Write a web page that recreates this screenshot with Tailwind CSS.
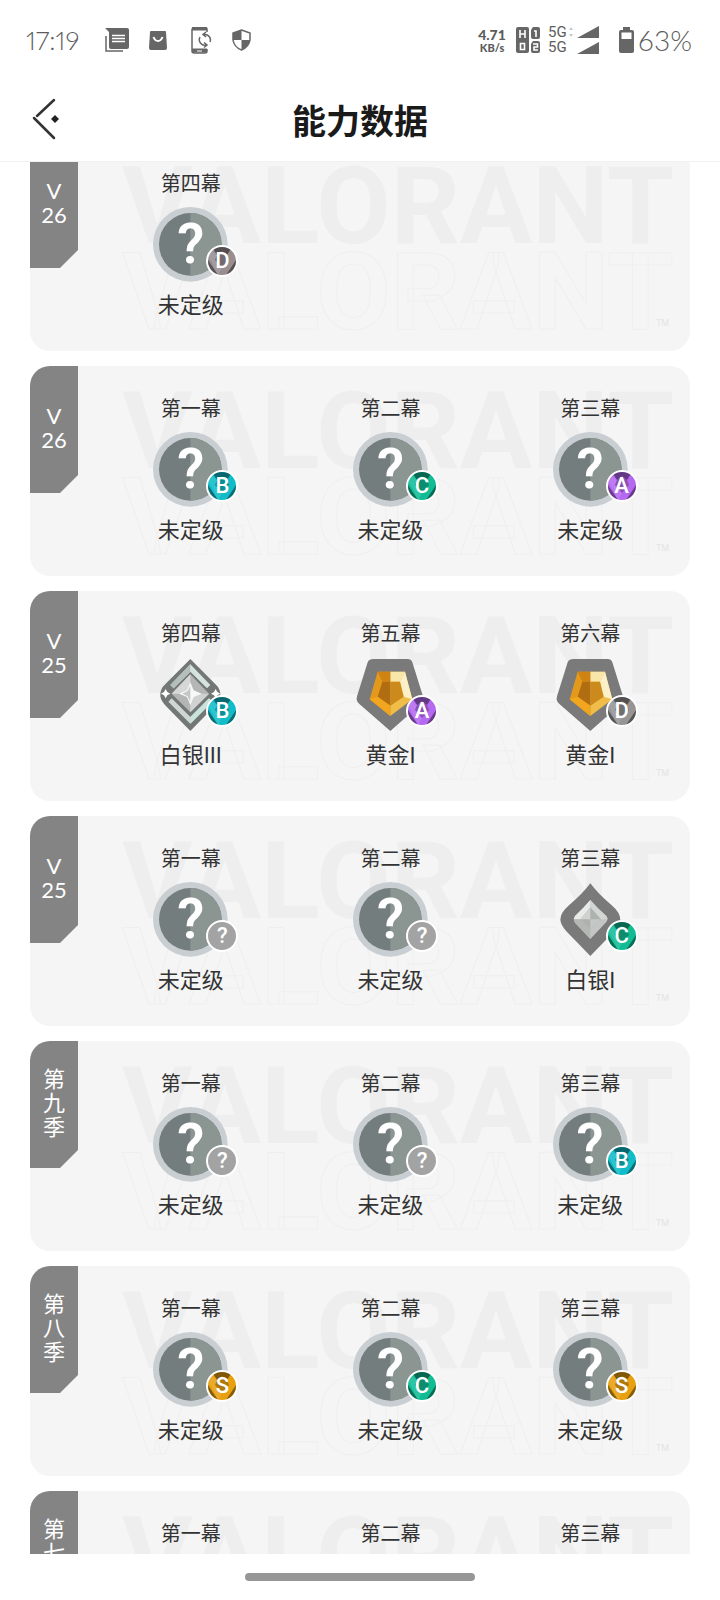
<!DOCTYPE html>
<html lang="zh-CN">
<head>
  <meta charset="UTF-8" />
  <meta name="viewport" content="width=device-width, initial-scale=1.0" />
  <title>能力数据</title>
  <script src="https://cdn.jsdelivr.net/npm/@tailwindcss/browser@4"></script>
</head>
<body class="h-screen overflow-hidden flex flex-col bg-white text-[#333] font-['Noto_Sans_CJK_SC',sans-serif]">

  <!-- Shared drawings -->
  <svg class="hidden" aria-hidden="true">
    <symbol id="tier-none" viewBox="0 0 225 225">
      <circle cx="112" cy="112" r="112" fill="#c8ced2" />
      <circle cx="112" cy="112" r="94" fill="#747d7e" />
      <path d="M112 18a94 94 0 0 1 0 188z" fill="#8b9592" />
    </symbol>
    <symbol id="tier-gold" viewBox="0 0 225 225">
      <path d="M62 6H164Q174 6 178 16L210 118Q214 132 203 142L112 222L20 142Q8 132 12 118L44 16Q48 6 62 6z" fill="#7a7a7a" />
      <path d="M74 44H112V177L50 127z" fill="#e39a1c" />
      <path d="M112 44H156L178 127L112 177z" fill="#f0bd48" />
      <path d="M112 44H156L141 74H112z" fill="#f8e7a8" />
      <path d="M74 44H112V74H88z" fill="#cf8312" />
      <path d="M156 44L178 127L152 119L141 74z" fill="#fbf0c8" />
      <path d="M88 74H112V146L74 119z" fill="#b06d12" />
      <path d="M112 74H141L152 119L112 146z" fill="#cc8a1d" />
      <path d="M50 127L74 119L112 146V177z" fill="#f2a61f" />
    </symbol>
    <symbol id="tier-silver1" viewBox="0 0 225 225">
      <path d="M112 4Q134 34 176 70Q202 92 202 114Q200 130 184 148L112 222L40 148Q24 130 22 114Q22 92 48 70Q90 34 112 4z" fill="#7a7a7a" />
      <path d="M112 54Q90 80 66 102Q60 112 66 122L112 171L158 122Q168 112 160 102Q134 80 112 54z" fill="#c3c6c4" />
      <path d="M112 54Q90 80 66 102L62 112H112z" fill="#e9ebea" />
      <path d="M112 54Q134 80 160 102L164 112H112z" fill="#d3d6d4" />
      <path d="M112 112H62L66 122L112 171z" fill="#b4b8b5" />
      <path d="M112 76L82 112L112 142L144 112z" fill="#aeb2ae" />
      <path d="M112 76V112H82z" fill="#cfd3d0" />
      <path d="M112 112H144L112 142z" fill="#c4c8c5" />
    </symbol>
    <symbol id="tier-silver3" viewBox="0 0 225 225">
      <path d="M112 6L186 80Q204 96 202 118Q200 132 186 146L112 222L38 146Q24 132 22 118Q20 96 38 80z" fill="#737877" />
      <path d="M112 22L172 84L162 94L112 44L62 94L52 84z" fill="#d5e4df" />
      <path d="M112 22V44L62 94L52 84z" fill="#b4bfbc" />
      <path d="M112 200L46 134L56 124L112 180L168 124L178 134z" fill="#cfd6d4" />
      <path d="M112 200V180L168 124L178 134z" fill="#c7e3dc" />
      <path d="M112 52L56 110L112 166L168 110z" fill="#b3b6b5" />
      <path d="M112 52L56 110L112 110z" fill="#d5d8d7" />
      <path d="M112 110H168L112 166z" fill="#cfd2d1" />
      <path d="M112 76L122 100L146 110L122 120L112 144L102 120L78 110L102 100z" fill="#f7f8f8" />
      <path d="M112 86L104 102L88 110L104 118L112 134z" fill="#c3c7c6" />
      <path d="M38 96L43 105L52 110L43 115L38 124L33 115L24 110L33 105zM188 96L193 105L202 110L193 115L188 124L183 115L174 110L183 105z" fill="#fff" />
    </symbol>
    <symbol id="facets" viewBox="0 0 28 28">
      <path d="M0 13L10 28H0zM28 13L18 28H28z" fill="#000" fill-opacity=".42" />
      <path d="M4 0H24L19 8L14 4L9 8z" fill="#000" fill-opacity=".45" />
      <path d="M9 8L14 4L19 8L21 13L14 21L7 13z" fill="#000" fill-opacity=".25" />
      <path d="M0 8L4 4L9 8L7 13L14 21L10 28z" fill="#fff" fill-opacity=".12" />
    </symbol>
    <symbol id="wordmark" viewBox="0 0 582 210">
      <g font-family="Roboto, sans-serif" font-weight="700" font-size="108">
        <text x="14" y="102" fill="#eeeeee">VALORANT</text>
        <text x="14" y="188" fill="none" stroke="#efefef">VALORANT</text>
      </g>
      <text x="548" y="185" fill="#e4e4e4" font-family="Roboto, sans-serif" font-size="9">TM</text>
    </symbol>
  </svg>

  <!-- Status bar -->
  <div class="h-20 shrink-0 flex items-center justify-between pl-[26px] pr-7 text-[#5c5c5c] font-[Lato,sans-serif]">
    <div class="flex items-center">
      <span class="w-[79px] text-[26px] font-light proportional-nums">17:19</span>
      <svg class="w-6 h-6 mr-5" viewBox="0 0 24 24" fill="#666"><path d="M0 0H22Q24 0 24 2V19Q24 21 22 21H6Q4 21 4 19V4z" /><path d="M1 8V23H18" fill="none" stroke="#666" stroke-width="1.5" /><path d="M7 7.500H20M7 10.500H20M7 13.500H20" stroke="#fff" stroke-width="1.300" /></svg>
      <svg class="w-[18px] h-[19px] mr-6" viewBox="0 0 18 19"><path d="M2 0H16Q17 0 17 1L18 17Q18 19 16 19H2Q0 19 0 17L1 1Q1 0 2 0z" fill="#666" /><path d="M4.500 6Q6 10 9 10T13.500 6" fill="none" stroke="#fff" stroke-width="2" /></svg>
      <svg class="w-[21px] h-[27px] mr-5" viewBox="0 0 21 27" fill="none" stroke="#666"><path d="M16 5V2Q16 1 15 1H3Q1 1 1 3V24Q1 26 3 26H14Q16 26 16 24V22" stroke-width="1.500" /><path d="M1 1.500H16M1 23.500H16" stroke-width="4" /><path d="M6 24H11" stroke="#fff" /><path d="M13 7.500A5.500 5.500 0 0 1 19 15M15 18A5.500 5.500 0 0 1 9 10M15 5L12 7.500L15 10M13 15.500L16 18L13 20.500" stroke-width="1.500" /></svg>
      <svg class="w-[19px] h-[22px]" viewBox="0 0 19 22"><path d="M9.500 1L18 4V11Q17 18 9.500 21Q2 18 1 11V4z" fill="#fff" stroke="#666" stroke-width="1.500" /><path d="M9.500 1V11H1V4zM9.500 11H18Q17 18 9.500 21z" fill="#666" /></svg>
    </div>
    <div class="flex items-center">
      <div class="w-9 flex flex-col font-black text-center">
        <span class="text-sm leading-[15px]">4.71</span>
        <span class="text-[11px] leading-3">KB/s</span>
      </div>
      <svg class="w-6 h-[26px] ml-[6px] mr-2" viewBox="0 0 24 26"><path d="M2 0H11Q13 0 13 2V24Q13 26 11 26H2Q0 26 0 24V2Q0 0 2 0zM17 0H22Q24 0 24 2V10Q24 12 22 12H17Q15 12 15 10V3zM17 14H22Q24 14 24 16V24Q24 26 22 26H17Q15 26 15 24V17z" fill="#666" /><path d="M4 3V11M9 3V11M4 7H9M4.500 16.500H8.500V22.500H4.500zM18 4H20V10M17 17H21.500V20H18V23H22" fill="none" stroke="#fff" stroke-width="1.600" /></svg>
      <div class="flex flex-col font-[Roboto] text-[15px] leading-[15px]"><span>5G</span><span>5G</span></div>
      <svg class="w-1 h-7 ml-[2px] mr-1" viewBox="0 0 4 28"><path d="M2 1L4 4H0zM2 11L4 8H0z" fill="#c8c8c8" /></svg>
      <svg class="w-[22px] h-7 mr-5" viewBox="0 0 22 28"><path d="M22 0V12H0zM22 16V28H0z" fill="#666" /></svg>
      <svg class="w-[15px] h-[26px] mr-1" viewBox="0 0 15 26"><path d="M4 0H11V3H13Q15 3 15 5V24Q15 26 13 26H2Q0 26 0 24V5Q0 3 2 3H4z" fill="#666" /><path d="M2.500 5.500H12.500V12H2.500z" fill="#fff" /></svg>
      <span class="text-[28px] font-light">63%</span>
    </div>
  </div>

  <!-- Header -->
  <header class="h-[82px] shrink-0 grid grid-cols-3 items-center border-b border-[#f1f1f1] px-8 pb-[2px]">
    <button aria-label="返回" class="w-8 h-11">
      <svg class="w-8 h-11" viewBox="0 0 32 44" fill="none" stroke="#333" stroke-width="2.500" stroke-linecap="round"><path d="M22 2L5 18M2 20L22 40" /><path d="M23 17L27 21L23 25L19 21z" fill="#222" stroke="none" /></svg>
    </button>
    <h1 class="text-center text-[34px] leading-[50px] font-bold text-[#1a1a1a] whitespace-nowrap">能力数据</h1>
  </header>

  <!-- Season list -->
  <main class="flex-1 min-h-0 overflow-hidden px-[30px]">
    <div id="seasons" class="-mt-[21px] flex flex-col gap-[15px]"></div>
  </main>

  <footer class="h-[46px] shrink-0 flex items-center justify-center">
    <div class="w-[230px] h-2 rounded-full bg-[#969696]"></div>
  </footer>

  <script>
    const seasons = [
      { name: ['V', '26'], acts: [['第四幕', 'none', '未定级', 'D2']] },
      { name: ['V', '26'], acts: [['第一幕', 'none', '未定级', 'B'], ['第二幕', 'none', '未定级', 'C'], ['第三幕', 'none', '未定级', 'A']] },
      { name: ['V', '25'], acts: [['第四幕', 'silver3', '白银III', 'B'], ['第五幕', 'gold', '黄金I', 'A'], ['第六幕', 'gold', '黄金I', 'D']] },
      { name: ['V', '25'], acts: [['第一幕', 'none', '未定级', '?'], ['第二幕', 'none', '未定级', '?'], ['第三幕', 'silver1', '白银I', 'C']] },
      { name: ['第', '九', '季'], acts: [['第一幕', 'none', '未定级', '?'], ['第二幕', 'none', '未定级', '?'], ['第三幕', 'none', '未定级', 'B']] },
      { name: ['第', '八', '季'], acts: [['第一幕', 'none', '未定级', 'S'], ['第二幕', 'none', '未定级', 'C'], ['第三幕', 'none', '未定级', 'S']] },
      { name: ['第', '七', '季'], acts: [['第一幕', 'none', '未定级', '?'], ['第二幕', 'none', '未定级', '?'], ['第三幕', 'none', '未定级', '?']] }
    ];

    const gradeColors = {
      'S': 'bg-[#e8a010]',
      'A': 'bg-[#b568f0]',
      'B': 'bg-[#10bcc8]',
      'C': 'bg-[#10bc94]',
      'D': 'bg-[#969494]',
      'D2': 'bg-[#988e92]',
      '?': 'bg-[#a3a3a3]'
    };

    function renderAct([act, tier, rank, grade]) {
      return `
        <div class="flex flex-col items-center">
          <h3 class="text-xl leading-7">${act}</h3>
          <div class="relative w-[75px] h-[75px] mt-[10px] mb-2">
            <svg class="w-full h-full"><use href="#tier-${tier}" /></svg>
            ${tier === 'none' ? `<span class="absolute inset-0 flex items-center justify-center text-white font-[Roboto] font-semibold text-[55px]">?</span>` : ''}
            <span class="absolute left-[53px] top-[38px] w-8 h-8 rounded-full border-2 border-white overflow-hidden flex items-center justify-center ${gradeColors[grade]}">
              ${grade === '?' ? '' : '<svg class="absolute inset-0 w-full h-full"><use href="#facets" /></svg>'}
              <span class="relative text-white font-[Roboto] font-medium text-[22px] leading-7">${grade[0]}</span>
            </span>
          </div>
          <p class="text-[22px] leading-8 font-[Roboto,'Noto_Sans_CJK_SC',sans-serif]">${rank}</p>
        </div>`;
    }

    document.getElementById('seasons').innerHTML = seasons.map(s => `
      <section class="relative shrink-0 flex h-[210px] rounded-[20px] overflow-hidden bg-[#f5f5f5]">
        <svg class="absolute left-[78px] top-0 w-[582px] h-[210px]"><use href="#wordmark" /></svg>
        <h2 class="relative w-12 h-[127px] pb-1 flex flex-col items-center justify-center bg-[#848484] text-white text-[22px] leading-6 font-[Lato,'Noto_Sans_CJK_SC',sans-serif] [clip-path:polygon(0_0,100%_0,100%_109px,30px_100%,0_100%)]">
          ${s.name.map(c => `<span>${c}</span>`).join('')}
        </h2>
        <div class="relative flex-1 ml-[13px] pt-7 grid grid-cols-3">${s.acts.map(renderAct).join('')}</div>
      </section>
    `).join('');
  </script>
</body>
</html>
